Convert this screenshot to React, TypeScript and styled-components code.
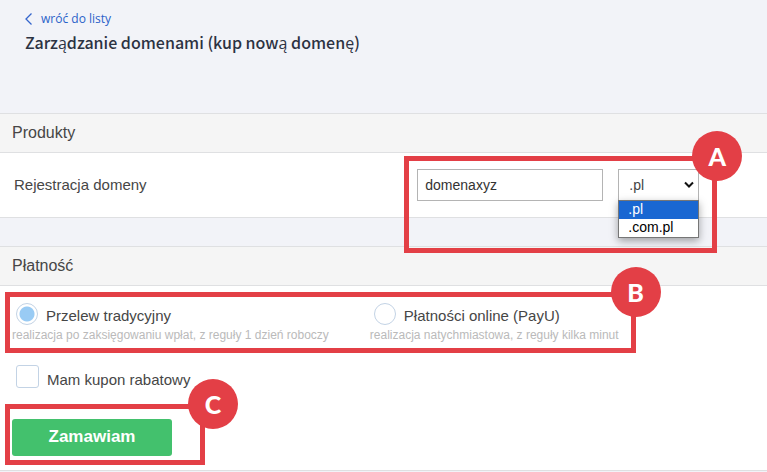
import React, { useState } from 'react';
import styled, { createGlobalStyle } from 'styled-components';

const GlobalStyle = createGlobalStyle`
  *, *::before, *::after { box-sizing: border-box; }
  body {
    margin: 0;
    background: #f2f3f8;
    color: #464646;
    font-family: "Liberation Sans", Arial, sans-serif;
    font-size: 15px;
    line-height: 18px;
  }
`;

const accent = '#e33f46';

const PageHeader = styled.header`
  display: flex;
  flex-direction: column;
  align-items: flex-start;
  gap: 2px;
  padding: 10px 24px 59px;
`;

const BackLink = styled.a`
  display: flex;
  align-items: center;
  gap: 8px;
  color: #2a62c9;
  font-family: "Open Sans", "Noto Sans", sans-serif;
  font-size: 12px;
  line-height: 18px;
  text-decoration: none;
`;

const Title = styled.h1`
  margin: 0;
  padding-left: 1px;
  color: #2c3242;
  font-family: "Noto Sans CJK SC", "Open Sans", sans-serif;
  font-size: 16px;
  font-weight: 500;
  line-height: 24px;
`;

const Sections = styled.main`
  display: flex;
  flex-direction: column;
  gap: 28px;
`;

const Panel = styled.section`
  background: #fff;
  border: solid #dfe0e2;
  border-width: 1px 0;
`;

const PanelTitle = styled.h2`
  margin: 0;
  padding: 9px 12px;
  background: #f5f5f5;
  border-bottom: 1px solid #dfe0e2;
  font-size: 16px;
  font-weight: 400;
  line-height: 20px;
`;

const ProductRow = styled.div`
  display: grid;
  grid-template-columns: 7fr 6fr;
  align-items: center;
  padding: 16px 4px 16px 14px;
`;

const Fields = styled.div`
  position: relative;
  display: flex;
  gap: 15px;
  width: fit-content;
`;

const TextInput = styled.input`
  width: 186px;
  height: 32px;
  padding: 0 7px;
  border: 1px solid #b4b4b4;
  background: #fff;
  color: #333;
  font: 14px "Liberation Sans", Arial, sans-serif;
`;

const SelectWrap = styled.div`
  position: relative;
  display: grid;
  align-items: center;
  width: 81px;
`;

const Select = styled.select`
  grid-area: 1 / 1;
  appearance: none;
  width: 100%;
  height: 32px;
  padding: 0 10px;
  border: 1px solid #b4b4b4;
  border-radius: 0;
  background: #fff;
  color: #444;
  font: 14px "Liberation Sans", Arial, sans-serif;
`;

const Chevron = styled.svg`
  grid-area: 1 / 1;
  justify-self: end;
  margin-right: 5px;
  pointer-events: none;
`;

const Menu = styled.ul`
  position: absolute;
  top: 100%;
  left: 0;
  right: 0;
  margin: -1px 0 0;
  padding: 0;
  list-style: none;
  border: 1px solid #767676;
  background: #fff;
  box-shadow: 0 3px 8px rgba(0, 0, 0, 0.35);
`;

const MenuItem = styled.li<{ $active: boolean }>`
  padding: 0 9px 2px;
  background: ${(p) => (p.$active ? '#1967d2' : '#fff')};
  color: ${(p) => (p.$active ? '#fff' : '#000')};
  font-size: 14px;
  line-height: 16px;
`;

const Frame = styled.div<{ $inset: string }>`
  position: absolute;
  inset: ${(p) => p.$inset};
  border: 5px solid ${accent};
  pointer-events: none;
`;

const Badge = styled.span<{ $right?: number }>`
  position: absolute;
  top: -30px;
  right: ${(p) => p.$right ?? -30}px;
  display: grid;
  place-items: center;
  width: 50px;
  height: 50px;
  border-radius: 50%;
  background: ${accent};
  color: #fff;
  font: 900 25px/50px Lato, sans-serif;
`;

const PaymentForm = styled.form`
  display: flex;
  flex-direction: column;
  align-items: flex-start;
  padding: 17px 12px 14px;
`;

const Methods = styled.div`
  position: relative;
  display: grid;
  grid-template-columns: auto auto;
  column-gap: 41px;
`;

const Choice = styled.label`
  display: flex;
  align-items: flex-start;
  gap: 8px;
  padding-left: 4px;
  line-height: 26px;
`;

const Radio = styled.input`
  appearance: none;
  width: 22px;
  height: 22px;
  margin: 0;
  border: 1px solid #c3d3e5;
  border-radius: 50%;
  background: #fff;
  &:checked { background: radial-gradient(circle, #99cbf4 0 7px, #fff 8px); }
`;

const Checkbox = styled.input`
  appearance: none;
  width: 23px;
  height: 23px;
  margin: 0;
  border: 1px solid #c3d3e5;
  border-radius: 3px;
  background: #fff;
  &:checked { background: #99cbf4; }
`;

const Hint = styled.p`
  margin: 0;
  color: #bababa;
  font-size: 12px;
  line-height: 12px;
`;

const CouponChoice = styled(Choice)`
  padding: 24px 0 24px 4px;
  line-height: 30px;
`;

const Submit = styled.div`
  position: relative;
`;

const OrderButton = styled.button`
  display: block;
  width: 160px;
  height: 37px;
  padding: 0 0 2px;
  border: 0;
  border-radius: 3px;
  background: #43c16d;
  color: #fff;
  font: 700 17px "Liberation Sans", Arial, sans-serif;
`;

const endings = ['.pl', '.com.pl'];

const methods = [
  { id: 'transfer', label: 'Przelew tradycyjny', hint: 'realizacja po zaksięgowaniu wpłat, z reguły 1 dzień roboczy' },
  { id: 'payu', label: 'Płatności online (PayU)', hint: 'realizacja natychmiastowa, z reguły kilka minut' },
];

export default function App() {
  const [name, setName] = useState('domenaxyz');
  const [ending, setEnding] = useState('.pl');
  const [method, setMethod] = useState('transfer');

  return (
    <>
      <GlobalStyle />
      <PageHeader>
        <BackLink href="#">
          <svg width="9" height="12" viewBox="0 0 9 12" fill="none" stroke="#3565cc" strokeWidth="1.3" aria-hidden="true">
            <path d="M7.5 0.5 2 6l5.5 5.5" />
          </svg>
          wróć do listy
        </BackLink>
        <Title>Zarządzanie domenami (kup nową domenę)</Title>
      </PageHeader>
      <Sections>
        <Panel>
          <PanelTitle>Produkty</PanelTitle>
          <ProductRow>
            <label htmlFor="domain">Rejestracja domeny</label>
            <Fields>
              <TextInput id="domain" value={name} onChange={(e) => setName(e.target.value)} />
              <SelectWrap>
                <Select aria-label="Rozszerzenie" value={ending} onChange={(e) => setEnding(e.target.value)}>
                  {endings.map((item) => <option key={item}>{item}</option>)}
                </Select>
                <Chevron width="10" height="8" viewBox="0 0 10 8" fill="none" stroke="#111" strokeWidth="2" aria-hidden="true">
                  <path d="M1 1.5 5 5.5 9 1.5" />
                </Chevron>
                <Menu role="listbox" aria-label="Rozszerzenie">
                  {endings.map((item) => (
                    <MenuItem key={item} role="option" aria-selected={item === ending} $active={item === ending} onClick={() => setEnding(item)}>
                      {item}
                    </MenuItem>
                  ))}
                </Menu>
              </SelectWrap>
              <Frame $inset="-13px -18px -52px -13px"><Badge>A</Badge></Frame>
            </Fields>
          </ProductRow>
        </Panel>
        <Panel>
          <PanelTitle>Płatność</PanelTitle>
          <PaymentForm onSubmit={(e) => e.preventDefault()}>
            <Methods>
              {methods.map((m) => (
                <div key={m.id}>
                  <Choice>
                    <Radio type="radio" name="method" checked={method === m.id} onChange={() => setMethod(m.id)} />
                    {m.label}
                  </Choice>
                  <Hint>{m.hint}</Hint>
                </div>
              ))}
              <Frame $inset="-11px -17px -12px -7px"><Badge>B</Badge></Frame>
            </Methods>
            <CouponChoice><Checkbox type="checkbox" />Mam kupon rabatowy</CouponChoice>
            <Submit>
              <OrderButton type="submit">Zamawiam</OrderButton>
              <Frame $inset="-15px -33px -9px -7px"><Badge $right={-38}>C</Badge></Frame>
            </Submit>
          </PaymentForm>
        </Panel>
      </Sections>
    </>
  );
}
